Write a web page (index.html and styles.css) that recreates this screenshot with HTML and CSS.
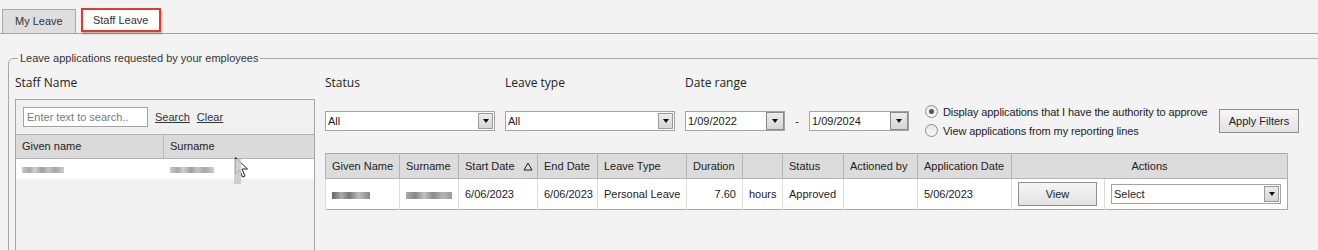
FILE: index.html
```html
<!DOCTYPE html>
<html lang="en">
<head>
    <meta charset="UTF-8">
    <meta name="viewport" content="width=device-width, initial-scale=1.0">
    <title>Staff Leave</title>
    <link rel="stylesheet" href="styles.css">
</head>
<body>
    <div class="tabs">
        <div class="tab">My Leave</div>
        <div class="tab tab-active">Staff Leave</div>
    </div>

    <fieldset class="panel">
        <legend>Leave applications requested by your employees</legend>
        <div class="panel-body">
            <!-- Staff picker -->
            <div class="staff">
                <div class="field-label">Staff Name</div>
                <div class="staff-box">
                    <div class="staff-search">
                        <input type="text" class="search-input" placeholder="Enter text to search..">
                        <a href="#">Search</a>
                        <a href="#">Clear</a>
                    </div>
                    <div class="staff-head">
                        <div class="col-given">Given name</div>
                        <div class="col-surname">Surname</div>
                    </div>
                    <div class="staff-row">
                        <div class="col-given"><span class="redact redact-given"></span></div>
                        <div class="col-surname"><span class="redact redact-surname"></span></div>
                    </div>
                </div>
                <div class="cursor">
                    <svg width="20" height="24" viewBox="0 0 20 24">
                        <path d="M1.5 1.5 L1.5 18 L5.5 14 L8.5 21 L11 20 L8 13 L13.5 13 Z" fill="#fff" stroke="#222" stroke-width="1"/>
                    </svg>
                    <span class="cursor-smudge"></span>
                </div>
            </div>

            <!-- Filters and results -->
            <div class="main">
                <div class="filter-labels">
                    <div class="lbl-status field-label">Status</div>
                    <div class="lbl-type field-label">Leave type</div>
                    <div class="lbl-date field-label">Date range</div>
                </div>

                <div class="filter-controls">
                    <div class="select select-wide">
                        <span class="select-value">All</span>
                        <span class="select-btn"><span class="caret"></span></span>
                    </div>
                    <div class="select select-wide">
                        <span class="select-value">All</span>
                        <span class="select-btn"><span class="caret"></span></span>
                    </div>
                    <div class="select select-date">
                        <span class="select-value">1/09/2022</span>
                        <span class="select-btn"><span class="caret"></span></span>
                    </div>
                    <span class="date-dash">-</span>
                    <div class="select select-date">
                        <span class="select-value">1/09/2024</span>
                        <span class="select-btn"><span class="caret"></span></span>
                    </div>

                    <div class="radios">
                        <label class="radio"><span class="radio-dot checked"></span>Display applications that I have the authority to approve</label>
                        <label class="radio"><span class="radio-dot"></span>View applications from my reporting lines</label>
                    </div>

                    <button class="btn btn-apply">Apply Filters</button>
                </div>

                <table class="grid">
                    <colgroup>
                        <col class="w74"><col class="w59"><col class="w79"><col class="w60">
                        <col class="w89"><col class="w56"><col class="w40"><col class="w61">
                        <col class="w74"><col class="w94"><col class="w93"><col class="w183">
                    </colgroup>
                    <thead>
                        <tr>
                            <th>Given Name</th>
                            <th>Surname</th>
                            <th>Start Date<svg class="sort" width="10" height="9" viewBox="0 0 10 9">
                                    <path d="M5 1 L9 8 L1 8 Z" fill="none" stroke="#222" stroke-width="1"/>
                                </svg></th>
                            <th>End Date</th>
                            <th>Leave Type</th>
                            <th>Duration</th>
                            <th></th>
                            <th>Status</th>
                            <th>Actioned by</th>
                            <th>Application Date</th>
                            <th class="c-actions" colspan="2">Actions</th>
                        </tr>
                    </thead>
                    <tbody>
                        <tr>
                            <td><span class="redact redact-given-sm"></span></td>
                            <td><span class="redact redact-surname-sm"></span></td>
                            <td>6/06/2023</td>
                            <td>6/06/2023</td>
                            <td>Personal Leave</td>
                            <td class="num">7.60</td>
                            <td>hours</td>
                            <td>Approved</td>
                            <td></td>
                            <td>5/06/2023</td>
                            <td class="c-view"><button class="btn btn-view">View</button></td>
                            <td class="c-select">
                                <div class="select select-action">
                                    <span class="select-value">Select</span>
                                    <span class="select-btn"><span class="caret"></span></span>
                                </div>
                            </td>
                        </tr>
                    </tbody>
                </table>
            </div>
        </div>
    </fieldset>
</body>
</html>
```

FILE: styles.css
```css
/* Base */
* {
    margin: 0;
    padding: 0;
    box-sizing: border-box;
}

html, body {
    overflow: hidden;
}

body {
    background-color: #f3f3f3;
    font-family: "Liberation Sans", Arial, sans-serif;
    font-size: 11px;
    color: #222;
}

/* Tabs */
.tabs {
    display: flex;
    align-items: flex-end;
    height: 34px;
    padding-left: 2px;
    border-bottom: 1px solid #a3a3a3;
}

.tab {
    height: 24px;
    line-height: 23px;
    padding: 0 12px;
    border: 1px solid #a8a8a8;
    border-bottom: none;
    background-color: #dedede;
    color: #333;
}

.tab-active {
    height: 24px;
    width: 80px;
    margin-left: 5px;
    margin-bottom: 1px;
    padding: 0;
    text-align: center;
    line-height: 20px;
    background-color: #fff;
    border: 2px solid #e2392c;
    box-shadow: 1px 2px 2px rgba(0, 0, 0, 0.25);
}

/* Outer group box */
.panel {
    margin: 18px -20px 0 8px;
    padding: 0 6px 20px 6px;
    border: 1px solid #a9a9a9;
    border-radius: 5px 0 0 0;
    min-height: 240px;
}

.panel legend {
    margin-left: 3px;
    padding: 0 2px;
    color: #333;
    line-height: 13px;
}

.panel-body {
    display: flex;
}

.field-label {
    font-family: "Open Sans", "Noto Sans", sans-serif;
    font-size: 12px;
    line-height: 16px;
    color: #222;
}

/* Staff picker */
.staff {
    position: relative;
    width: 300px;
    margin-right: 10px;
    padding-top: 10px;
}

.staff-box {
    margin-top: 8px;
    height: 170px;
    border: 1px solid #a6a6a6;
    background-color: #f0f0f0;
}

.staff-search {
    display: flex;
    align-items: center;
    gap: 7px;
    height: 34px;
    padding: 0 0 1px 7px;
}

.search-input {
    width: 125px;
    height: 20px;
    padding: 0 3px;
    border: 1px solid #a3a3a3;
    background-color: #fff;
    font-family: "Liberation Sans", Arial, sans-serif;
    font-size: 11px;
    outline: none;
}

.search-input::placeholder {
    color: #7a7a7a;
}

.staff-search a {
    color: #333;
    text-decoration: underline;
}

.staff-head,
.staff-row {
    display: flex;
}

.staff-head {
    height: 25px;
    line-height: 23px;
    background-color: #dadada;
    border-top: 1px solid #b3b3b3;
    border-bottom: 1px solid #b3b3b3;
}

.staff-head .col-given {
    border-right: 1px solid #b8b8b8;
}

.col-given {
    width: 148px;
    padding-left: 6px;
}

.col-surname {
    padding-left: 6px;
    flex: 1;
}

.staff-row {
    height: 20px;
    align-items: center;
    background-color: #fff;
}

.redact {
    display: inline-block;
    height: 6px;
    vertical-align: middle;
    background: linear-gradient(90deg, #c9c9c9 0, #a8a8a8 18%, #d0d0d0 30%, #9d9d9d 48%, #c4c4c4 62%, #a5a5a5 80%, #cfcfcf 100%);
    filter: blur(0.7px);
}

.redact-given { width: 42px; }
.redact-surname { width: 44px; }
.redact-given-sm {
    width: 38px;
    height: 7px;
    background: linear-gradient(90deg, #666 0, #aaa 25%, #777 45%, #bbb 70%, #888 100%);
}
.redact-surname-sm {
    width: 46px;
    height: 7px;
    background: linear-gradient(90deg, #aaa 0, #888 20%, #c0c0c0 40%, #8a8a8a 60%, #b5b5b5 80%, #999 100%);
}

.cursor {
    position: absolute;
    left: 219px;
    top: 91px;
}

.cursor-smudge {
    position: absolute;
    left: 0;
    top: 3px;
    width: 7px;
    height: 25px;
    background-color: rgba(200, 200, 200, 0.85);
}

/* Filters */
.main {
    flex: 1;
    padding-top: 10px;
}

.filter-labels {
    display: flex;
}

.lbl-status,
.lbl-type {
    width: 180px;
}

.filter-controls {
    display: flex;
    align-items: center;
    height: 38px;
    margin-top: 11px;
}

.select {
    position: relative;
    display: flex;
    align-items: center;
    height: 20px;
    border: 1px solid #a3a3a3;
    background-color: #fff;
    font-size: 11px;
}

.select-value {
    flex: 1;
    padding-left: 2px;
}

.select-btn {
    display: flex;
    align-items: center;
    justify-content: center;
    width: 15px;
    height: 16px;
    margin-right: 1px;
    border: 1px solid #9a9a9a;
    background: linear-gradient(#ececec, #d6d6d6);
}

.caret {
    width: 0;
    height: 0;
    border-left: 3.5px solid transparent;
    border-right: 3.5px solid transparent;
    border-top: 4px solid #111;
}

.select-wide {
    width: 170px;
    margin-right: 10px;
}

.select-date {
    width: 100px;
}

.select-date .select-btn {
    width: 18px;
    height: 18px;
    margin-right: 0;
    border-color: #8a8a8a;
}

.date-dash {
    width: 24px;
    text-align: center;
}

.radios {
    display: flex;
    flex-direction: column;
    gap: 6px;
    width: 294px;
    margin-left: 16px;
    letter-spacing: -0.1px;
    color: #222;
}

.radio {
    display: flex;
    align-items: center;
    gap: 5px;
    height: 13px;
}

.radio-dot {
    display: flex;
    align-items: center;
    justify-content: center;
    width: 13px;
    height: 13px;
    border: 1px solid #8c8c8c;
    border-radius: 50%;
    background: linear-gradient(#e6e6e6, #fafafa);
}

.radio-dot.checked::after {
    content: "";
    width: 5px;
    height: 5px;
    border-radius: 50%;
    background-color: #555;
}

.btn {
    border: 1px solid #8f8f8f;
    background: linear-gradient(#f6f6f6, #e2e2e2);
    font-family: "Liberation Sans", Arial, sans-serif;
    font-size: 11px;
    color: #222;
}

.btn-apply {
    width: 80px;
    height: 24px;
}

/* Results grid */
.grid {
    width: 962px;
    margin-top: 13px;
    table-layout: fixed;
    border-collapse: collapse;
    border: 1px solid #a8a8a8;
    background-color: #fff;
}

.w40 { width: 40px; }
.w56 { width: 56px; }
.w59 { width: 59px; }
.w60 { width: 60px; }
.w61 { width: 61px; }
.w74 { width: 74px; }
.w79 { width: 79px; }
.w89 { width: 89px; }
.w93 { width: 93px; }
.w94 { width: 94px; }
.w183 { width: 183px; }

.grid th {
    height: 25px;
    padding: 0 6px;
    background-color: #dcdcdc;
    border: 1px solid #b4b4b4;
    border-top-color: #a8a8a8;
    font-weight: normal;
    text-align: left;
    white-space: nowrap;
}

.grid td {
    height: 31px;
    padding: 0 6px;
    border-left: 1px solid #dcdcdc;
    white-space: nowrap;
}

.grid td.num {
    text-align: right;
}

.sort {
    margin-left: 8px;
    vertical-align: -1px;
}

.grid th.c-actions {
    text-align: center;
}

.btn-view {
    width: 79px;
    height: 24px;
}

.select-action {
    width: 170px;
}
```
